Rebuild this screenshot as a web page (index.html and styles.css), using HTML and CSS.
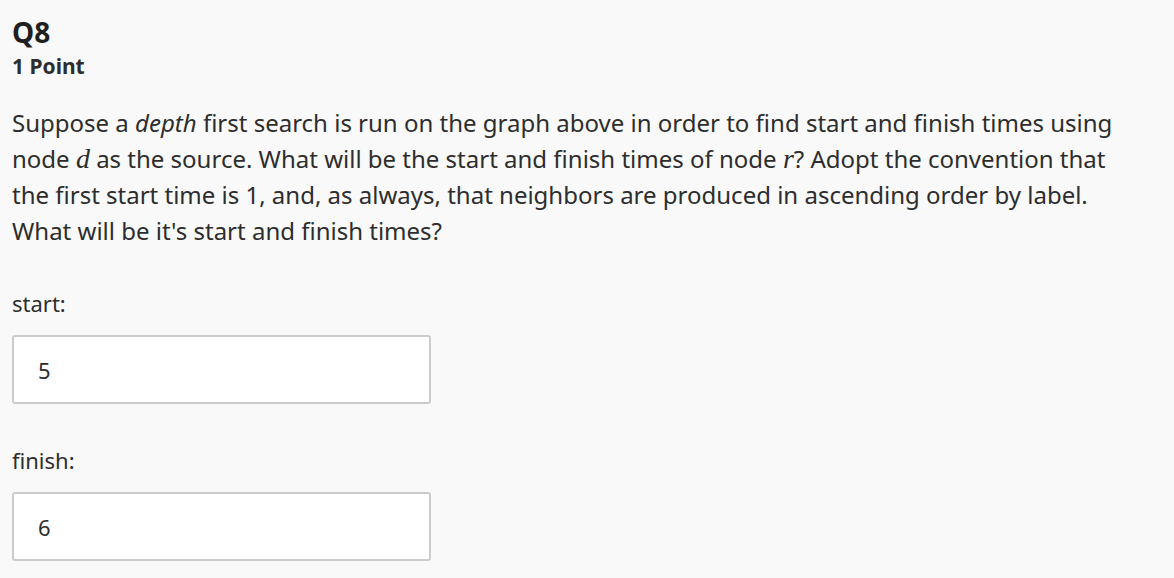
FILE: index.html
```html
<!DOCTYPE html>
<html>
<head>
<meta charset="utf-8">
<link rel="stylesheet" href="styles.css">
</head>
<body>
<div class="question">
  <div class="q-head">
    <div class="q-title">Q8</div>
    <div class="q-points">1 Point</div>
  </div>
  <p class="q-text">Suppose a <em>depth</em> first search is run on the graph above in order to find start and finish times using node <span class="math">d</span> as the source. What will be the start and finish times of node <span class="math">r</span>? Adopt the convention that the first start time is 1, and, as always, that neighbors are produced in ascending order by label. What will be it's start and finish times?</p>
  <div class="fields">
    <div class="field">
      <label class="field-label">start:</label>
      <div class="field-input">5</div>
    </div>
    <div class="field">
      <label class="field-label">finish:</label>
      <div class="field-input">6</div>
    </div>
  </div>
</div>
</body>
</html>
```

FILE: styles.css
```css
html, body {
  margin: 0;
  padding: 0;
  background: #f9f9f9;
}
body {
  font-family: "Noto Sans", "Open Sans", sans-serif;
  color: #2d2d2d;
}
.question {
  padding: 15px 12px 0 12px;
}
.q-title {
  font-size: 28px;
  font-weight: 700;
  line-height: 34px;
  color: #1f1f1f;
}
.q-points {
  font-size: 21px;
  font-weight: 700;
  line-height: 28px;
  margin-top: 3px;
}
.q-text {
  margin: 25px 0 0 0;
  font-size: 24px;
  line-height: 36px;
  max-width: 1125px;
}
.q-text em {
  font-style: italic;
}
.math {
  font-family: "Liberation Serif", "DejaVu Serif", serif;
  font-style: italic;
  font-size: 28px;
  line-height: 1;
}
.fields {
  margin-top: 39px;
  display: flex;
  flex-direction: column;
  gap: 41px;
}
.field {
  display: flex;
  flex-direction: column;
  gap: 17px;
}
.field-label {
  font-size: 22px;
  line-height: 30px;
}
.field-input {
  width: 419px;
  height: 69px;
  box-sizing: border-box;
  border: 2px solid #cccccc;
  border-radius: 3px;
  background: #ffffff;
  display: flex;
  align-items: center;
  padding-left: 24px;
  font-size: 22px;
}
```
